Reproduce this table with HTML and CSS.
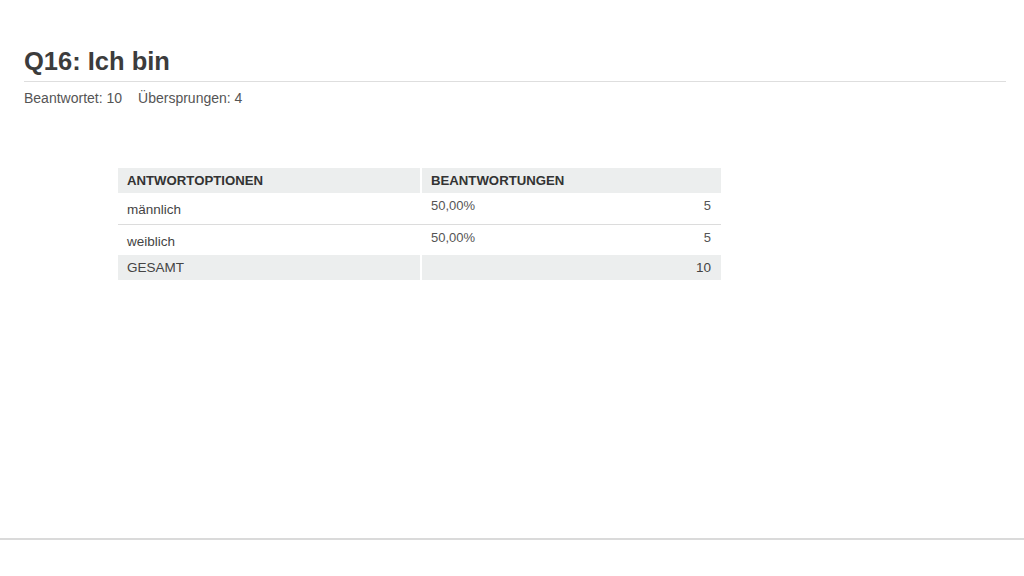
FILE: index.html
```html
<!DOCTYPE html>
<html lang="de">
<head>
<meta charset="utf-8">
<title>Q16: Ich bin</title>
<link rel="stylesheet" href="styles.css">
</head>
<body>
<main class="page">
  <header class="q-head">
    <h1 class="q-title">Q16: Ich bin</h1>
  </header>
  <p class="q-meta"><span>Beantwortet: 10</span><span>Übersprungen: 4</span></p>
  <div class="grid">
    <div class="row head">
      <div class="cell">ANTWORTOPTIONEN</div>
      <div class="cell">BEANTWORTUNGEN</div>
    </div>
    <div class="row data sep">
      <div class="cell label">männlich</div>
      <div class="cell value"><span>50,00%</span><span>5</span></div>
    </div>
    <div class="row data">
      <div class="cell label">weiblich</div>
      <div class="cell value"><span>50,00%</span><span>5</span></div>
    </div>
    <div class="row total">
      <div class="cell">GESAMT</div>
      <div class="cell value"><span></span><span>10</span></div>
    </div>
  </div>
</main>
<div class="footer-line"></div>
</body>
</html>
```

FILE: styles.css
```css
* { box-sizing: border-box; }

html, body {
  margin: 0;
  padding: 0;
  background: #ffffff;
  font-family: "Liberation Sans", Arial, sans-serif;
  color: #444;
}

.page {
  padding: 46px 18px 0 24px;
}

.q-head {
  padding-bottom: 5px;
  border-bottom: 1px solid #dedede;
}

.q-title {
  margin: 0;
  font-size: 25.5px;
  line-height: 30px;
  font-weight: bold;
  color: #3c3c3c;
}

.q-meta {
  margin: 8px 0 0;
  font-size: 14px;
  line-height: 16px;
  color: #555;
  display: flex;
  gap: 16px;
}

.grid {
  margin: 62px 0 0 94px;
  width: 603px;
  font-size: 13.5px;
}

.row {
  display: grid;
  grid-template-columns: 302px 299px;
  column-gap: 2px;
}

.row.head {
  height: 25px;
}

.row.head .cell {
  background: #eceeee;
  font-weight: bold;
  font-size: 13.2px;
  color: #333;
  line-height: 25px;
  padding-left: 9px;
}

.row.data {
  height: 30px;
}

.row.data.sep {
  height: 32px;
  border-bottom: 1px solid #dcdcdc;
}

.row.data .label {
  padding: 9px 0 0 9px;
  line-height: 16px;
  color: #444;
}

.row.data .value {
  padding: 5px 10px 0 9px;
  line-height: 16px;
  font-size: 13px;
  color: #555;
}

.value {
  display: flex;
  justify-content: space-between;
}

.row.total {
  height: 25px;
}

.row.total .cell {
  background: #eceeee;
  line-height: 25px;
  padding: 0 10px 0 9px;
  color: #444;
}

.footer-line {
  margin-top: 258px;
  height: 2px;
  background: #dadada;
}
```
